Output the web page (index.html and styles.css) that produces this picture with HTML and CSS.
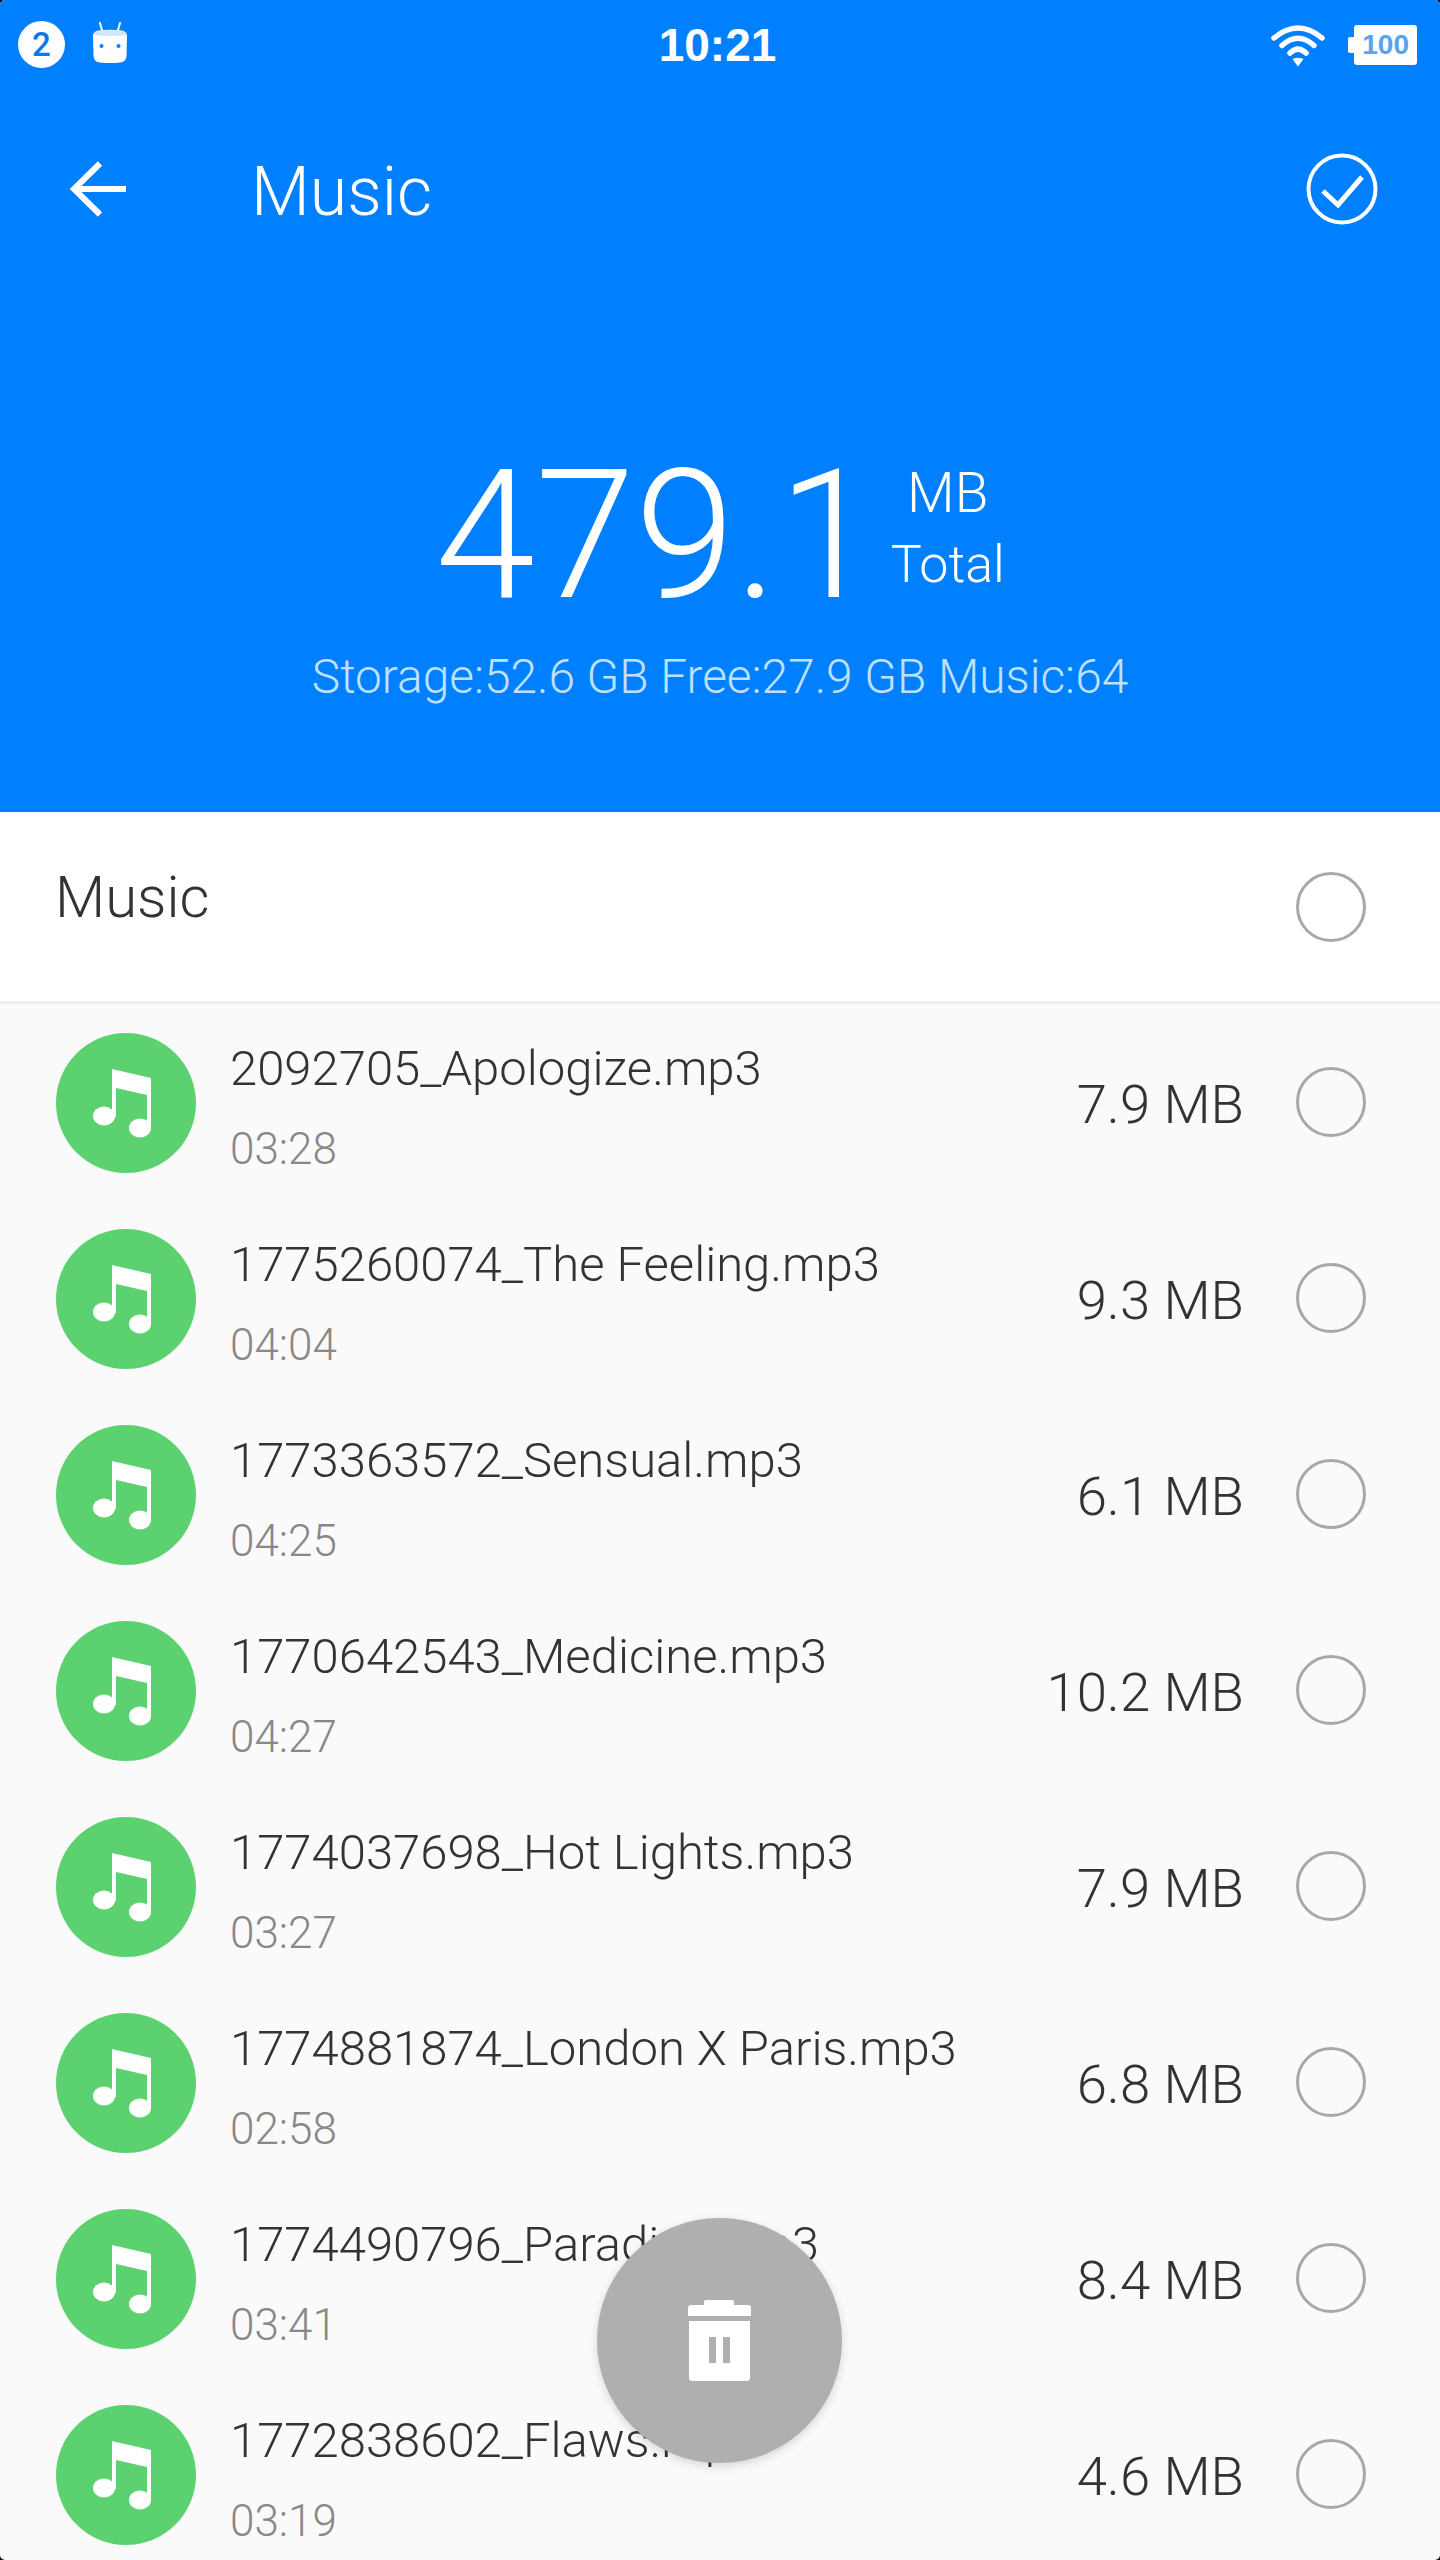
FILE: index.html
```html
<!DOCTYPE html>
<html lang="en">
<head>
  <meta charset="UTF-8">
  <meta name="viewport" content="width=device-width, initial-scale=1.0">
  <title>Music</title>
  <link rel="stylesheet" href="styles.css">
</head>
<body>
  <div class="screen">
    <header class="top">
      <div class="status">
        <div class="status-side">
          <span class="badge">2</span>
          <svg class="android" viewBox="0 0 36 42" width="36" height="42">
            <path d="M8 1 L10.5 10 M28 1 L25.5 10" stroke="#fff" stroke-width="2" stroke-linecap="round"/>
            <path d="M1 14 Q1 9 7 8.500 Q18 7 29 8.500 Q35 9 35 14 L34.500 34 Q34 40 28 40.500 Q18 41.500 8 40.500 Q2 40 1.500 34 Z" fill="#fff"/>
            <path d="M1.500 13 Q2 9.500 7 9 Q18 7.500 29 9 Q34 9.500 34.500 13 Q18 15 1.500 13 Z" fill="#cfe6ff"/>
            <circle cx="9.500" cy="24" r="2" fill="#0a7ff5"/>
            <circle cx="26.500" cy="24" r="2" fill="#0a7ff5"/>
          </svg>
        </div>
        <div class="clock">10:21</div>
        <div class="status-side">
          <svg class="wifi" viewBox="0 0 54 44" width="54" height="44">
            <path d="M3 15 Q27 -5 51 15" fill="none" stroke="#fff" stroke-width="5.500" stroke-linecap="round"/>
            <path d="M11 22.500 Q27 8 43 22.500" fill="none" stroke="#fff" stroke-width="5.500" stroke-linecap="round"/>
            <path d="M19 30 Q27 22 35 30" fill="none" stroke="#fff" stroke-width="5.500" stroke-linecap="round"/>
            <path d="M21.500 36 Q27 33.500 32.500 36 L27 43.500 Z" fill="#fff"/>
          </svg>
          <div class="battery"><span class="battery-cap"></span><span class="battery-body">100</span></div>
        </div>
      </div>

      <div class="toolbar">
        <svg class="back" viewBox="0 0 60 58" width="60" height="58">
          <path d="M57 29 H6 M31 3.500 L5 29 L31 54.500" fill="none" stroke="#fff" stroke-width="6"/>
        </svg>
        <div class="toolbar-title">Music</div>
        <svg class="done" viewBox="0 0 72 72" width="72" height="72">
          <circle cx="36" cy="36" r="33.500" fill="none" stroke="#fff" stroke-width="4"/>
          <path d="M17 38 L32 52 L56 24" fill="none" stroke="#fff" stroke-width="5"/>
        </svg>
      </div>

      <div class="total">
        <div class="total-num">479.1</div>
        <div class="total-unit">
          <div class="total-mb">MB</div>
          <div>Total</div>
        </div>
      </div>
      <div class="storage">Storage:52.6 GB Free:27.9 GB Music:64</div>
    </header>

    <div class="section">
      <div class="section-title">Music</div>
      <span class="radio"></span>
    </div>

    <div class="list">
      <div class="row">
        <svg class="note" viewBox="0 0 140 140" width="140" height="140"><use href="#note-icon"/></svg>
        <div class="info"><div class="name">2092705_Apologize.mp3</div><div class="time">03:28</div></div>
        <div class="size">7.9 MB</div>
        <span class="radio"></span>
      </div>
      <div class="row">
        <svg class="note" viewBox="0 0 140 140" width="140" height="140"><use href="#note-icon"/></svg>
        <div class="info"><div class="name">1775260074_The Feeling.mp3</div><div class="time">04:04</div></div>
        <div class="size">9.3 MB</div>
        <span class="radio"></span>
      </div>
      <div class="row">
        <svg class="note" viewBox="0 0 140 140" width="140" height="140"><use href="#note-icon"/></svg>
        <div class="info"><div class="name">1773363572_Sensual.mp3</div><div class="time">04:25</div></div>
        <div class="size">6.1 MB</div>
        <span class="radio"></span>
      </div>
      <div class="row">
        <svg class="note" viewBox="0 0 140 140" width="140" height="140"><use href="#note-icon"/></svg>
        <div class="info"><div class="name">1770642543_Medicine.mp3</div><div class="time">04:27</div></div>
        <div class="size">10.2 MB</div>
        <span class="radio"></span>
      </div>
      <div class="row">
        <svg class="note" viewBox="0 0 140 140" width="140" height="140"><use href="#note-icon"/></svg>
        <div class="info"><div class="name">1774037698_Hot Lights.mp3</div><div class="time">03:27</div></div>
        <div class="size">7.9 MB</div>
        <span class="radio"></span>
      </div>
      <div class="row">
        <svg class="note" viewBox="0 0 140 140" width="140" height="140"><use href="#note-icon"/></svg>
        <div class="info"><div class="name">1774881874_London X Paris.mp3</div><div class="time">02:58</div></div>
        <div class="size">6.8 MB</div>
        <span class="radio"></span>
      </div>
      <div class="row">
        <svg class="note" viewBox="0 0 140 140" width="140" height="140"><use href="#note-icon"/></svg>
        <div class="info"><div class="name">1774490796_Paradise.mp3</div><div class="time">03:41</div></div>
        <div class="size">8.4 MB</div>
        <span class="radio"></span>
      </div>
      <div class="row">
        <svg class="note" viewBox="0 0 140 140" width="140" height="140"><use href="#note-icon"/></svg>
        <div class="info"><div class="name">1772838602_Flaws.mp3</div><div class="time">03:19</div></div>
        <div class="size">4.6 MB</div>
        <span class="radio"></span>
      </div>
    </div>

    <div class="fab">
      <svg viewBox="0 0 64 82" width="64" height="82">
        <path d="M16 6 V2 Q16 0 18 0 H44 Q46 0 46 2 V5 H60 Q63 5 63 8 V16 H0 V8 Q0 5 3 5 H16 Z" fill="#fff"/>
        <path d="M1 21 H62 V78 Q62 81 59 81 H4 Q1 81 1 78 Z M21 37 V63 H28 V37 Z M35 37 V63 H42 V37 Z" fill="#fff" fill-rule="evenodd"/>
      </svg>
    </div>
  </div>

  <svg class="defs" width="0" height="0">
    <symbol id="note-icon" viewBox="0 0 140 140">
      <circle cx="70" cy="70" r="70" fill="#5bd170"/>
      <path d="M56 36 L95 45 V96 H91 V62 L60 55 V84 H56 Z" fill="#fff"/>
      <ellipse cx="48" cy="83" rx="11" ry="9.500" fill="#fff"/>
      <ellipse cx="84" cy="95" rx="11" ry="9.500" fill="#fff"/>
    </symbol>
  </svg>
</body>
</html>
```

FILE: styles.css
```css
* {
  box-sizing: border-box;
}
body {
  margin: 0;
  background: #000;
  font-family: Roboto, "Liberation Sans", sans-serif;
  font-weight: 300;
}
.screen {
  position: relative;
  width: 1440px;
  height: 2560px;
  overflow: hidden;
  background: #fafafa;
  border-radius: 5px;
}
.defs {
  position: absolute;
}

/* blue header */
.top {
  height: 812px;
  background: #0080ff;
  color: #fff;
}
.status {
  display: flex;
  align-items: center;
  justify-content: space-between;
  height: 90px;
  padding: 0 23px 0 18px;
  border-bottom: 1px solid #0a7cf0;
}
.status-side {
  display: flex;
  align-items: center;
  width: 400px;
}
.status-side:last-child {
  justify-content: flex-end;
}
.badge {
  width: 47px;
  height: 47px;
  border-radius: 50%;
  background: #fff;
  color: #0a78e6;
  font-size: 33px;
  font-weight: 500;
  line-height: 47px;
  text-align: center;
}
.android {
  margin-left: 27px;
  margin-bottom: 4px;
}
.clock {
  font-family: "Liberation Sans", sans-serif;
  font-size: 46px;
  font-weight: 700;
}
.wifi {
  margin-right: 23px;
}
.battery {
  display: flex;
  align-items: center;
}
.battery-cap {
  width: 6px;
  height: 16px;
  background: #fff;
  border-radius: 2px 0 0 2px;
}
.battery-body {
  width: 63px;
  height: 40px;
  border-radius: 3px;
  background: #fff;
  color: #5aa2f0;
  font-family: "Liberation Sans", sans-serif;
  font-size: 28px;
  font-weight: 700;
  line-height: 40px;
  text-align: right;
  padding-right: 8px;
}
.toolbar {
  display: flex;
  align-items: center;
  height: 198px;
  padding: 0 62px 0 69px;
}
.toolbar-title {
  flex: 1;
  margin-left: 122px;
  padding-top: 6px;
  font-size: 68px;
  line-height: 80px;
}
.total {
  display: flex;
  justify-content: center;
  align-items: flex-start;
  margin-top: 144px;
  height: 200px;
}
.total-num {
  margin-top: 4px;
  font-size: 180px;
  line-height: 200px;
}
.total-unit {
  margin-left: 13px;
  padding-top: 26px;
  font-size: 52px;
  line-height: 71px;
  text-align: center;
}
.total-mb {
  font-size: 55px;
}
.storage {
  margin-top: 17px;
  color: #bfe0ff;
  font-size: 47.800px;
  line-height: 56px;
  text-align: center;
}

/* list */
.section {
  display: flex;
  align-items: center;
  justify-content: space-between;
  height: 192px;
  padding: 0 74px 0 55px;
  background: #fff;
  border-bottom: 3px solid #eee;
}
.section-title {
  margin-top: -20px;
  color: #333;
  font-size: 58px;
}
.radio {
  flex: none;
  width: 70px;
  height: 70px;
  border: 3px solid #a8a8a8;
  border-radius: 50%;
}
.row {
  display: flex;
  align-items: center;
  height: 196px;
  padding: 0 74px 0 56px;
}
.note {
  flex: none;
  margin-top: 2px;
}
.info {
  flex: 1;
  margin-left: 34px;
  padding-top: 9px;
}
.name {
  color: #333;
  font-size: 49px;
  line-height: 60px;
}
.time {
  margin-top: 25px;
  color: #888;
  font-size: 44px;
  line-height: 50px;
}
.size {
  margin-top: 3px;
  margin-right: 52px;
  color: #333;
  font-size: 54.500px;
}
.fab {
  position: absolute;
  left: 597px;
  top: 2218px;
  display: flex;
  align-items: center;
  justify-content: center;
  width: 245px;
  height: 245px;
  border-radius: 50%;
  background: #afafaf;
  box-shadow: 0 3px 10px rgba(0, 0, 0, 0.15);
}
```
